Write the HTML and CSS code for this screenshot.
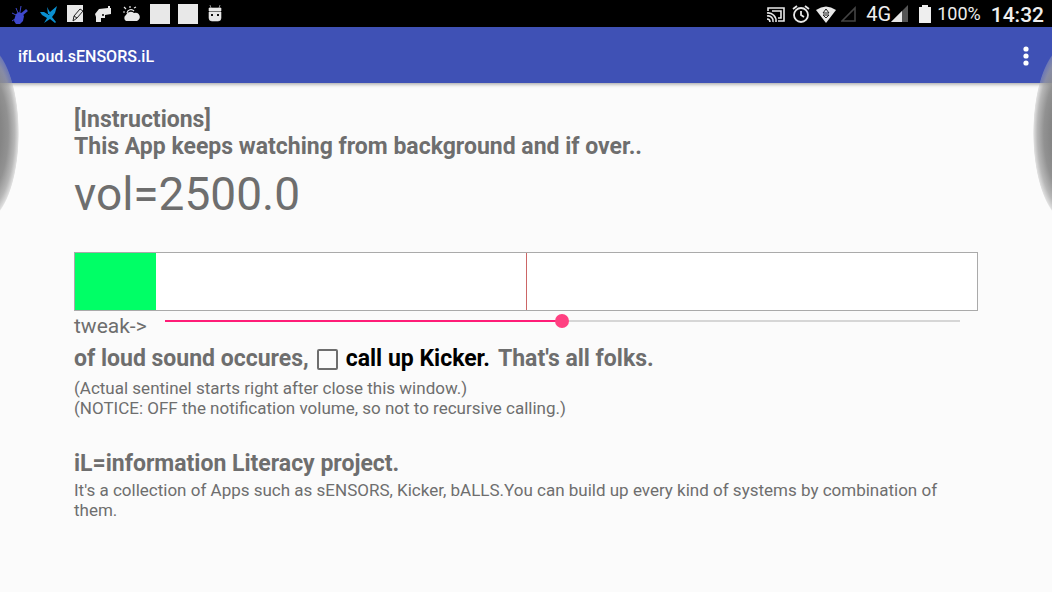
FILE: index.html
```
<!DOCTYPE html>
<html lang="en">
<head>
    <meta charset="UTF-8">
    <meta name="viewport" content="width=device-width, initial-scale=1.0">
    <title>ifLoud.sENSORS.iL</title>
    <link rel="stylesheet" href="styles.css">
</head>
<body>
    <div class="statusbar">
        <div class="notifications">
            <svg class="icon" viewBox="0 0 20 20" fill="#3f48cc" stroke="#3f48cc">
                <path d="M6 10L9 8L12 9L14 12L13 17L10 20L6 20L4 17L5 13Z" stroke="none"/>
                <path d="M10 12L17 6" stroke-width="2.8"/>
                <path d="M8 9L6 4M10 8L11 2M6 11L2 9M5 15L2 17" fill="none" stroke-width="1"/>
            </svg>
            <svg class="icon" viewBox="0 0 20 20" fill="#0a8fd0">
                <path d="M2 8L6 8L11 11L12 8L19 2L17 9L14 13L18 18L17 19L12 15L6 19L9 14L4 11Z"/>
                <path d="M9 3L13 10L10 10Z"/>
            </svg>
            <svg class="icon" viewBox="0 0 20 20">
                <path d="M1 1H17V18H1Z" fill="#e8e8e8"/>
                <path d="M7 17L8 12L14 5L17 7L11 14ZM8 12L11 14" fill="#e8e8e8" stroke="#222" stroke-width="1"/>
            </svg>
            <svg class="icon" viewBox="0 0 20 20" fill="#e8e8e8">
                <path d="M1 10L5 5L14 4V2H16V4H17V10L11 11L11 14L7 14L7 18L2 18L2 13Z"/>
                <circle cx="9" cy="11" r="1" fill="#000"/>
            </svg>
            <svg class="icon" viewBox="0 0 20 20" fill="#e8e8e8">
                <path d="M4 17A3.5 3.5 0 0 1 4 11A5 5 0 0 1 12 9A4 4 0 1 1 15 17Z"/>
                <path d="M5 9A4 4 0 0 1 12 7M8 4V2M4 5L2 3M12 4L14 3M3 8H1" fill="none" stroke="#e8e8e8" stroke-width="1.2"/>
            </svg>
            <span class="blank"></span>
            <span class="blank"></span>
            <svg class="icon" viewBox="0 0 20 20">
                <path d="M3 8H15V14Q15 17 12 17H6Q3 17 3 14ZM3 7V4H15V7ZM5 4L4 1M13 4L14 1" fill="#e8e8e8" stroke="#e8e8e8" stroke-width=".6"/>
                <path d="M5 10H7V12H5ZM11 10H13V12H11Z" fill="#111"/>
            </svg>
        </div>
        <div class="system">
            <svg class="icon" viewBox="0 0 20 20" fill="none" stroke="#e8e8e8" stroke-width="1.6">
                <path d="M2 7V4H18V17H12"/>
                <path d="M6 7H15V14H12" />
                <path d="M1 9A8 8 0 0 1 10 18M1 12A5 5 0 0 1 7 18M1 15A3 3 0 0 1 4 18"/>
            </svg>
            <svg class="icon" viewBox="0 0 20 20" fill="none" stroke="#e8e8e8" stroke-width="1.8">
                <circle cx="10" cy="11" r="7"/>
                <path d="M10 7V11L13 13M2 5L6 2M18 5L14 2"/>
            </svg>
            <svg class="icon" viewBox="0 0 20 20">
                <path d="M0 6Q10 -1 20 6L10 19Z" fill="#e8e8e8"/>
                <path d="M7 9L10 5L13 9ZM7 11L10 14L13 11Z" fill="none" stroke="#222"/>
            </svg>
            <svg class="icon" viewBox="0 0 20 20">
                <path d="M1 17L14 4V17Z" fill="none" stroke="#444" stroke-width="1.6"/>
            </svg>
            <span class="network">4G</span>
            <svg class="signal" viewBox="0 0 17 17">
                <path d="M0 17L17 0V17Z" fill="#555"/>
                <path d="M0 17L11 6V17Z" fill="#e8e8e8"/>
            </svg>
            <svg class="battery" viewBox="0 0 12 18">
                <path d="M0 2H3V0H9V2H12V18H0Z" fill="#eee"/>
            </svg>
            <span class="percent">100%</span>
            <time class="clock">14:32</time>
        </div>
    </div>

    <header class="appbar">
        <h1>ifLoud.sENSORS.iL</h1>
        <button class="more" type="button" aria-label="More options">
            <svg viewBox="0 0 6 20" fill="#fff">
                <circle cx="3" cy="3" r="2.6"/>
                <circle cx="3" cy="10" r="2.6"/>
                <circle cx="3" cy="17" r="2.6"/>
            </svg>
        </button>
    </header>

    <main class="content">
        <h2>[Instructions]<br>This App keeps watching from background and if over..</h2>
        <p class="volume">vol=2500.0</p>

        <div class="meter">
            <div class="level" style="width: 9%"></div>
            <div class="threshold" style="left: 50%"></div>
        </div>

        <div class="tweak">
            <label for="tweak">tweak-&gt;</label>
            <input type="range" id="tweak" min="0" max="100" value="50">
        </div>

        <div class="action">
            <span>of loud sound occures,</span>
            <input type="checkbox" id="kicker">
            <label for="kicker">call up Kicker.</label>
            <span>That's all folks.</span>
        </div>
        <p class="note">(Actual sentinel starts right after close this window.)<br>(NOTICE: OFF the notification volume, so not to recursive calling.)</p>

        <h2 class="project">iL=information Literacy project.</h2>
        <p class="note">It's a collection of Apps such as sENSORS, Kicker, bALLS.You can build up every kind of systems by combination of them.</p>
    </main>

    <!-- edge glow on both sides of the screen -->
    <div class="glow glow-left"></div>
    <div class="glow glow-right"></div>
</body>
</html>
```
FILE: styles.css
```
* {
    box-sizing: border-box;
}
body {
    font-family: Roboto, sans-serif;
    margin: 0;
    position: relative;
    min-height: 100vh;
    overflow-x: hidden;
    color: #6e6e6e;
    background-color: #fbfbfb;
}
h1, h2, p {
    margin: 0;
}
.statusbar {
    display: flex;
    justify-content: space-between;
    height: 27px;
    padding: 0 8px 0 10px;
    background-color: #000;
    color: #eee;
}
.notifications, .system {
    display: flex;
    align-items: center;
}
.notifications {
    gap: 8px;
}
.icon {
    width: 20px;
    height: 20px;
}
.blank {
    width: 20px;
    height: 20px;
    background-color: #e8e8e8;
}
.system .icon {
    margin-right: 5px;
}
.network {
    font-size: 20px;
}
.signal {
    width: 17px;
    height: 17px;
    margin-right: 11px;
}
.battery {
    width: 12px;
    height: 18px;
    margin-right: 6px;
}
.percent {
    font-size: 18px;
    margin-right: 10px;
}
.clock {
    font-size: 21px;
    font-weight: 500;
    padding-top: 3px;
}
.appbar {
    display: flex;
    align-items: center;
    justify-content: space-between;
    height: 56px;
    padding: 2px 18px 0;
    background-color: #3f51b5;
    color: #fff;
    box-shadow: 0 1px 4px rgba(0,0,0,0.4);
}
.appbar h1 {
    font-size: 16px;
    font-weight: 500;
}
.more {
    display: flex;
    padding: 0 5px;
    border: none;
    background: none;
    cursor: pointer;
}
.more svg {
    width: 6px;
    height: 20px;
}
.content {
    padding: 23px 74px 0;
}
h2 {
    font-size: 23px;
    font-weight: 700;
    line-height: 27px;
}
.volume {
    margin-top: 6px;
    font-size: 46px;
    line-height: 56px;
}
.meter {
    position: relative;
    height: 59px;
    margin-top: 30px;
    border: 1px solid #aaa;
    background-color: #fff;
}
.level {
    height: 100%;
    background-color: #00ff66;
}
.threshold {
    position: absolute;
    top: 0;
    width: 1px;
    height: 100%;
    background-color: #c66;
}
.tweak {
    display: flex;
    align-items: flex-start;
    gap: 18px;
    height: 32px;
    padding-right: 18px;
}
.tweak label {
    font-size: 21px;
    line-height: 30px;
}
.tweak input {
    flex: 1;
    appearance: none;
    height: 20px;
    margin: 0;
    background: linear-gradient(to right, #ff1c77 50%, #d6d6d6 50%) center / 100% 2px no-repeat;
}
.tweak input::-webkit-slider-thumb {
    appearance: none;
    width: 14px;
    height: 14px;
    border-radius: 50%;
    background-color: #ff4081;
}
.action {
    display: flex;
    align-items: center;
    gap: 8px;
    font-size: 23px;
    font-weight: 700;
    line-height: 32px;
}
.action label {
    color: #000;
}
.action input {
    appearance: none;
    width: 21px;
    height: 21px;
    margin: 0;
    border: 2px solid #6e6e6e;
    border-radius: 2px;
}
.action input:checked {
    background-color: #ff4081;
}
.note {
    margin-top: 3px;
    font-size: 17px;
    line-height: 20px;
}
.project {
    margin-top: 32px;
}
.glow {
    position: absolute;
    top: 44px;
    width: 19px;
    height: 178px;
    overflow: hidden;
}
.glow::before {
    content: "";
    position: absolute;
    top: 0;
    width: 72px;
    height: 178px;
    border-radius: 50%;
    background: radial-gradient(closest-side, #858585 50%, rgba(140,140,140,0.95) 70%, rgba(160,160,160,0.75) 88%, rgba(180,180,180,0.4) 98%, rgba(200,200,200,0) 100%);
}
.glow-left {
    left: 0;
}
.glow-left::before {
    right: 0;
}
.glow-right {
    right: 0;
}
.glow-right::before {
    left: 0;
}
```
